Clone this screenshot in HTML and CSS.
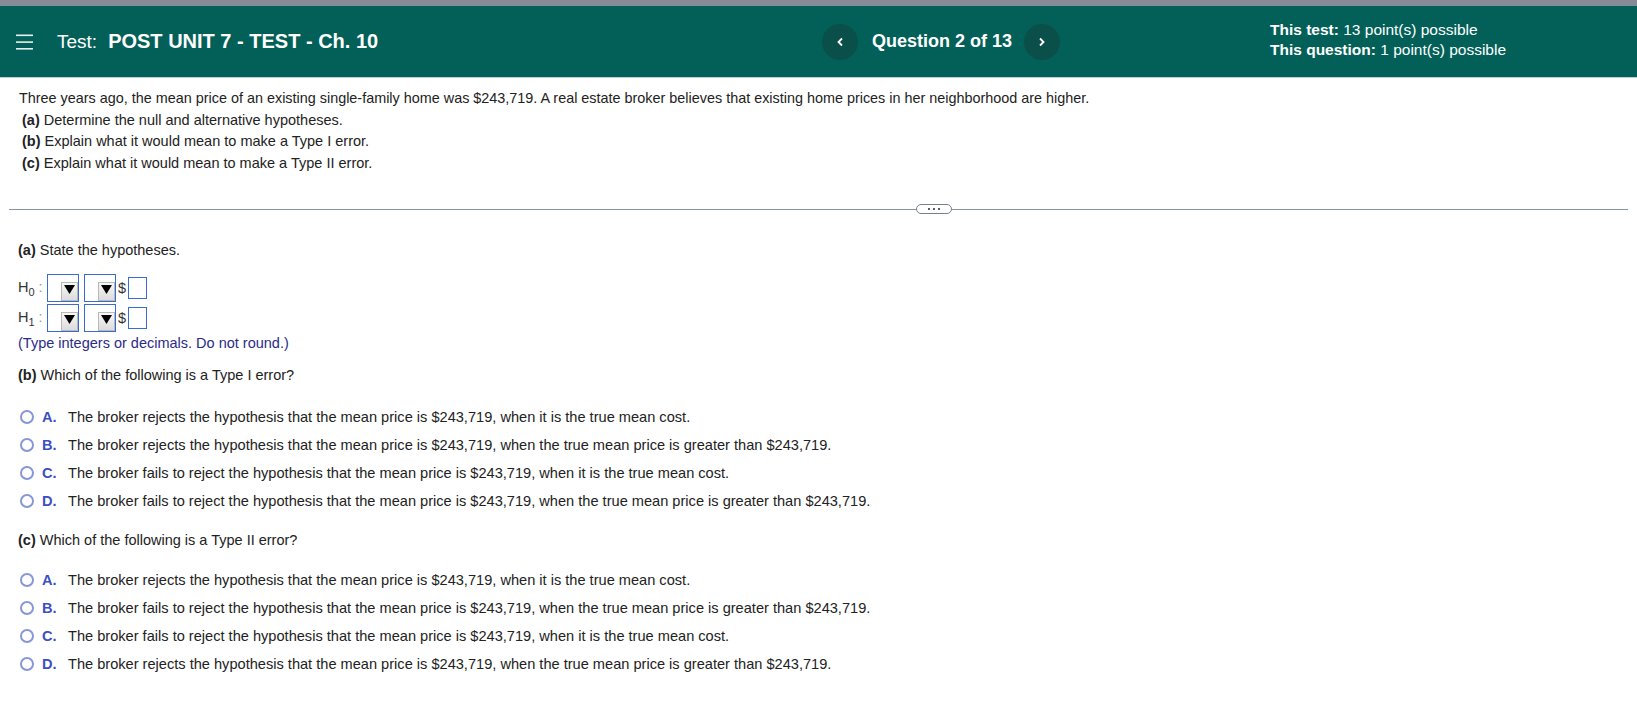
FILE: index.html
```html
<!DOCTYPE html>
<html lang="en">
<head>
<meta charset="utf-8">
<title>Test: POST UNIT 7 - TEST - Ch. 10</title>
<link rel="stylesheet" href="styles.css">
</head>
<body>
<div class="topbar"></div>
<header class="header">
  <div class="hdr-left">
    <svg class="burger" width="17" height="16" viewBox="0 0 17 16"><rect x="0" y="0.5" width="17" height="1.6" fill="#e6efee"/><rect x="0" y="7.3" width="17" height="1.6" fill="#e6efee"/><rect x="0" y="14" width="17" height="1.6" fill="#e6efee"/></svg>
    <span class="test-lbl">Test:</span>
    <span class="test-title">POST UNIT 7 - TEST - Ch. 10</span>
  </div>
  <div class="hdr-nav">
    <span class="nav-btn"><svg width="8" height="10" viewBox="0 0 8 10"><polyline points="6,1.5 2.5,5 6,8.5" fill="none" stroke="#fff" stroke-width="1.8"/></svg></span>
    <span class="nav-text">Question 2 of 13</span>
    <span class="nav-btn"><svg width="8" height="10" viewBox="0 0 8 10"><polyline points="2,1.5 5.5,5 2,8.5" fill="none" stroke="#fff" stroke-width="1.8"/></svg></span>
  </div>
  <div class="hdr-info">
    <div><b>This test:</b> 13 point(s) possible</div>
    <div><b>This question:</b> 1 point(s) possible</div>
  </div>
</header>

<main>
  <section class="stem">
    <p class="lead">Three years ago, the mean price of an existing single-family home was $243,719. A real estate broker believes that existing home prices in her neighborhood are higher.</p>
    <p class="sub"><b>(a)</b> Determine the null and alternative hypotheses.</p>
    <p class="sub"><b>(b)</b> Explain what it would mean to make a Type I error.</p>
    <p class="sub"><b>(c)</b> Explain what it would mean to make a Type II error.</p>
  </section>

  <div class="divider">
    <span class="dline left"></span>
    <span class="pill"><i></i><i></i><i></i></span>
    <span class="dline right"></span>
  </div>

  <section class="answers">
    <p class="qline part-a"><b>(a)</b> State the hypotheses.</p>
    <div class="hyp">
      <div class="hrow">
        <span class="hlab">H<sub>0</sub><span class="colon">:</span></span>
        <span class="sel"><span class="arrow"><svg width="11" height="9" viewBox="0 0 11 9"><polygon points="0,0 11,0 5.5,9" fill="#000"/></svg></span></span>
        <span class="sel"><span class="arrow"><svg width="11" height="9" viewBox="0 0 11 9"><polygon points="0,0 11,0 5.5,9" fill="#000"/></svg></span></span>
        <span class="dollar">$</span>
        <span class="inp"></span>
      </div>
      <div class="hrow">
        <span class="hlab">H<sub>1</sub><span class="colon">:</span></span>
        <span class="sel"><span class="arrow"><svg width="11" height="9" viewBox="0 0 11 9"><polygon points="0,0 11,0 5.5,9" fill="#000"/></svg></span></span>
        <span class="sel"><span class="arrow"><svg width="11" height="9" viewBox="0 0 11 9"><polygon points="0,0 11,0 5.5,9" fill="#000"/></svg></span></span>
        <span class="dollar">$</span>
        <span class="inp"></span>
      </div>
    </div>
    <p class="hint">(Type integers or decimals. Do not round.)</p>

    <p class="qline part-b"><b>(b)</b> Which of the following is a Type I error?</p>
    <ul class="opts">
      <li><span class="radio"></span><span class="let">A.</span>The broker rejects the hypothesis that the mean price is $243,719, when it is the true mean cost.</li>
      <li><span class="radio"></span><span class="let">B.</span>The broker rejects the hypothesis that the mean price is $243,719, when the true mean price is greater than $243,719.</li>
      <li><span class="radio"></span><span class="let">C.</span>The broker fails to reject the hypothesis that the mean price is $243,719, when it is the true mean cost.</li>
      <li><span class="radio"></span><span class="let">D.</span>The broker fails to reject the hypothesis that the mean price is $243,719, when the true mean price is greater than $243,719.</li>
    </ul>

    <p class="qline part-c"><b>(c)</b> Which of the following is a Type II error?</p>
    <ul class="opts">
      <li><span class="radio"></span><span class="let">A.</span>The broker rejects the hypothesis that the mean price is $243,719, when it is the true mean cost.</li>
      <li><span class="radio"></span><span class="let">B.</span>The broker fails to reject the hypothesis that the mean price is $243,719, when the true mean price is greater than $243,719.</li>
      <li><span class="radio"></span><span class="let">C.</span>The broker fails to reject the hypothesis that the mean price is $243,719, when it is the true mean cost.</li>
      <li><span class="radio"></span><span class="let">D.</span>The broker rejects the hypothesis that the mean price is $243,719, when the true mean price is greater than $243,719.</li>
    </ul>
  </section>
</main>
</body>
</html>
```

FILE: styles.css
```css
* { box-sizing: border-box; }
html, body { margin: 0; padding: 0; background: #fff; }
body {
  font-family: "Liberation Sans", Arial, sans-serif;
  font-size: 14.5px;
  color: #222;
}
p { margin: 0; }

.topbar { height: 6px; background: #858c97; }

.header {
  height: 72px;
  background: #036058;
  border-bottom: 1px solid #b9d4d1;
  display: flex;
  align-items: center;
  color: #fff;
  white-space: nowrap;
}
.hdr-left {
  flex: 0 0 822px;
  display: flex;
  align-items: center;
  padding-left: 16px;
}
.burger { display: block; margin-right: 24px; }
.test-lbl { font-size: 19px; margin-right: 11px; }
.test-title { font-size: 20px; font-weight: bold; }

.hdr-nav {
  flex: 0 0 auto;
  display: flex;
  align-items: center;
}
.nav-btn {
  flex: 0 0 36px;
  width: 36px; height: 36px;
  border-radius: 50%;
  background: #0b4f4a;
  display: flex; align-items: center; justify-content: center;
}
.nav-btn svg { display: block; }
.nav-text { font-size: 18px; font-weight: bold; margin: 0 12px 0 14px; }

.hdr-info {
  margin-left: auto;
  width: 367px;
  font-size: 15.5px;
  line-height: 20px;
  margin-top: -3px;
}

.stem { padding: 9px 0 0 19px; }
.lead { line-height: 22px; margin-bottom: 0.5px; font-size: 14.4px; }
.sub { line-height: 21.5px; padding-left: 3px; }

.divider {
  display: flex;
  align-items: center;
  height: 10px;
  margin: 30px 9px 0 9px;
}
.dline { height: 1px; background: #8693a0; }
.dline.left { flex: 0 0 907px; }
.dline.right { flex: 1; }
.pill {
  width: 36px; height: 10px;
  border: 1px solid #75818e;
  border-radius: 5px;
  display: flex; align-items: center; justify-content: center;
  gap: 3px;
}
.pill i { display: block; width: 2px; height: 2px; background: #55606c; }

.answers { padding-left: 18px; }
.qline { line-height: 22px; }
.part-a { margin-top: 25px; }
.part-b { margin-top: 10px; }
.part-c { margin-top: 14px; }

.hyp { margin-top: 13px; display: flex; flex-direction: column; gap: 2px; }
.hrow { display: flex; align-items: center; height: 28px; }
.hlab { width: 29px; color: #333; font-size: 14.5px; }
.hlab sub { font-size: 11px; vertical-align: -4px; }
.colon { color: #999; margin-left: 4px; }
.sel {
  width: 32px; height: 28px;
  border: 1.5px solid #3a6bd1;
  margin-right: 5px;
  background: #fff;
  display: flex; align-items: flex-end; justify-content: flex-end;
  padding: 0 0.5px 0.5px 0;
}
.arrow {
  width: 17px; height: 19px;
  background: linear-gradient(#f7f7f7, #dcdcdc);
  border: 1px solid #b8b8b8;
  display: flex; align-items: center; justify-content: center;
}
.arrow svg { display: block; margin-top: -3px; }
.dollar { margin-left: -3px; width: 10px; color: #333; }
.inp {
  width: 19px; height: 22px;
  border: 1.5px solid #3a6bd1;
  background: #fff;
}
.hint { color: #2b2b8a; line-height: 22px; }

.opts { list-style: none; margin: 17px 0 0 2px; padding: 0; font-size: 14.6px; }
.part-c + .opts { margin-top: 15px; }
.opts li { height: 28px; display: flex; align-items: center; }
.radio {
  flex: 0 0 14px;
  width: 14px; height: 14px;
  border: 2px solid #8797d6;
  border-radius: 50%;
  margin-right: 8px;
  background: #fff;
}
.let { width: 26px; color: #3b4fc4; font-weight: bold; }
```
